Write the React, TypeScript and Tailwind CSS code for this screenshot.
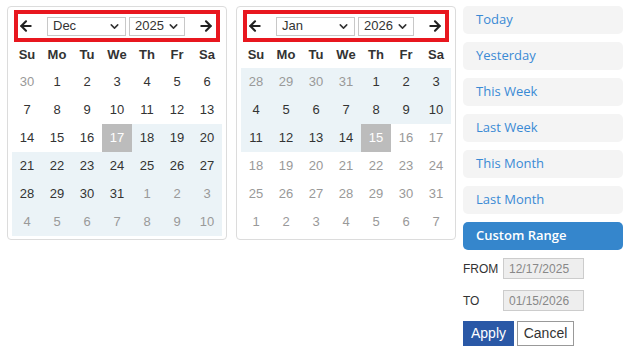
import React from "react";
import { ArrowLeft, ArrowRight, ChevronDown } from "lucide-react";

type Day = { n: number; muted?: boolean; range?: boolean; sel?: boolean };

const dec: Day[][] = [
  [{ n: 30, muted: true }, { n: 1 }, { n: 2 }, { n: 3 }, { n: 4 }, { n: 5 }, { n: 6 }],
  [{ n: 7 }, { n: 8 }, { n: 9 }, { n: 10 }, { n: 11 }, { n: 12 }, { n: 13 }],
  [{ n: 14 }, { n: 15 }, { n: 16 }, { n: 17, sel: true }, { n: 18, range: true }, { n: 19, range: true }, { n: 20, range: true }],
  [21, 22, 23, 24, 25, 26, 27].map((n) => ({ n, range: true })),
  [
    ...[28, 29, 30, 31].map((n) => ({ n, range: true })),
    ...[1, 2, 3].map((n) => ({ n, range: true, muted: true })),
  ],
  [4, 5, 6, 7, 8, 9, 10].map((n) => ({ n, range: true, muted: true })),
];

const jan: Day[][] = [
  [
    ...[28, 29, 30, 31].map((n) => ({ n, range: true, muted: true })),
    ...[1, 2, 3].map((n) => ({ n, range: true })),
  ],
  [4, 5, 6, 7, 8, 9, 10].map((n) => ({ n, range: true })),
  [
    ...[11, 12, 13, 14].map((n) => ({ n, range: true })),
    { n: 15, sel: true },
    { n: 16, muted: true },
    { n: 17, muted: true },
  ],
  [18, 19, 20, 21, 22, 23, 24].map((n) => ({ n, muted: true })),
  [25, 26, 27, 28, 29, 30, 31].map((n) => ({ n, muted: true })),
  [1, 2, 3, 4, 5, 6, 7].map((n) => ({ n, muted: true })),
];

const weekdays = ["Su", "Mo", "Tu", "We", "Th", "Fr", "Sa"];

function FakeSelect({ label, width }: { label: string; width: string }) {
  return (
    <div
      className={`${width} h-[19px] border border-[#c8c8c8] bg-white flex items-center justify-between pl-[5px] pr-[4px] text-[13px] text-[#333]`}
    >
      <span>{label}</span>
      <ChevronDown size={13} strokeWidth={2.8} className="text-[#333]" />
    </div>
  );
}

function Calendar({ month, year, weeks }: { month: string; year: string; weeks: Day[][] }) {
  return (
    <div className="w-[220px] border border-[#dcdcdc] rounded-[4px] px-[4px] pt-[3px] pb-[3px]">
      <div className="mx-[2px] h-[32px] border-4 border-[#e8171f] flex items-center">
        <ArrowLeft size={16} strokeWidth={3.2} className="text-[#222]" />
        <div className="ml-[13px]">
          <FakeSelect label={month} width="w-[79px]" />
        </div>
        <div className="ml-[3px]">
          <FakeSelect label={year} width="w-[56px]" />
        </div>
        <ArrowRight size={16} strokeWidth={3.2} className="ml-[13px] text-[#222]" />
      </div>
      <div className="grid grid-cols-7 h-[26px] items-center text-[13px] font-bold text-[#333]">
        {weekdays.map((w) => (
          <div key={w} className="text-center">
            {w}
          </div>
        ))}
      </div>
      {weeks.map((row, i) => (
        <div key={i} className="grid grid-cols-7">
          {row.map((d, j) => (
            <div
              key={j}
              className={`h-[28px] flex items-center justify-center text-[13px] ${
                d.sel
                  ? "bg-[#bcbcbc] text-white"
                  : d.range
                  ? "bg-[#ebf3f7]"
                  : ""
              } ${d.sel ? "" : d.muted ? "text-[#999]" : "text-[#333]"}`}
            >
              {d.n}
            </div>
          ))}
        </div>
      ))}
    </div>
  );
}

const ranges = ["Today", "Yesterday", "This Week", "Last Week", "This Month", "Last Month"];

export default function App() {
  return (
    <div
      className="w-[628px] h-[353px] bg-white flex items-start pt-[6px] pl-[7px]"
      style={{ fontFamily: '"Liberation Sans", Arial, sans-serif' }}
    >
      <Calendar month="Dec" year="2025" weeks={dec} />
      <div className="ml-[9px]">
        <Calendar month="Jan" year="2026" weeks={jan} />
      </div>
      <div className="ml-[7px] w-[160px] flex flex-col">
        <div className="flex flex-col gap-[8px] font-['Open_Sans',sans-serif]">
          {ranges.map((r) => (
            <div
              key={r}
              className="h-[28px] rounded-[5px] bg-[#f4f4f4] text-[#3a8ad4] text-[13px] flex items-center pl-[13px]"
            >
              {r}
            </div>
          ))}
          <div className="h-[28px] rounded-[5px] bg-[#3586cc] text-white text-[13px] font-semibold flex items-center pl-[13px]">
            Custom Range
          </div>
        </div>
        <div className="mt-[8px] flex items-center">
          <span className="w-[40px] text-[12px] text-[#333]">FROM</span>
          <div className="w-[81px] h-[21px] bg-[#eee] border border-[#ccc] text-[12px] text-[#888] flex items-center pl-[5px]">
            12/17/2025
          </div>
        </div>
        <div className="mt-[11px] flex items-center">
          <span className="w-[40px] text-[12px] text-[#333]">TO</span>
          <div className="w-[81px] h-[21px] bg-[#eee] border border-[#ccc] text-[12px] text-[#888] flex items-center pl-[5px]">
            01/15/2026
          </div>
        </div>
        <div className="mt-[10px] flex gap-[3px]">
          <button className="w-[51px] h-[25px] bg-[#2a58a6] text-white text-[14px]">Apply</button>
          <button className="w-[57px] h-[25px] bg-white border border-[#999] text-[#333] text-[14px]">
            Cancel
          </button>
        </div>
      </div>
    </div>
  );
}
